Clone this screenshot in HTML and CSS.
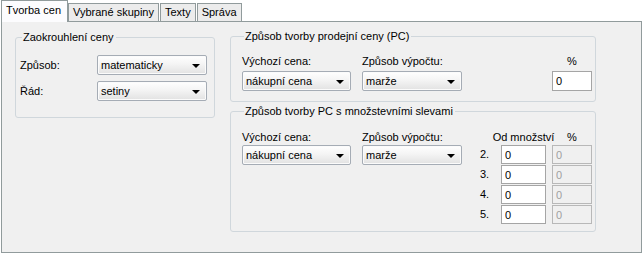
FILE: index.html
```html
<!DOCTYPE html>
<html lang="cs">
<head>
  <meta charset="UTF-8" />
  <title>Tvorba cen</title>
  <link rel="stylesheet" href="styles.css">
</head>
<body>
  <div class="tabs">
    <div class="tab active">Tvorba cen</div>
    <div class="tab">Vybrané skupiny</div>
    <div class="tab">Texty</div>
    <div class="tab">Správa</div>
  </div>

  <div class="panel">
    <fieldset class="group rounding">
      <legend>Zaokrouhlení ceny</legend>
      <div class="form-row">
        <label>Způsob:</label>
        <div class="combo wide"><span>matematicky</span><i class="arrow"></i></div>
      </div>
      <div class="form-row">
        <label>Řád:</label>
        <div class="combo wide"><span>setiny</span><i class="arrow"></i></div>
      </div>
    </fieldset>

    <div class="right-col">
      <fieldset class="group price">
        <legend>Způsob tvorby prodejní ceny (PC)</legend>
        <div class="cols">
          <div class="col col-base">
            <label>Výchozí cena:</label>
            <div class="combo"><span>nákupní cena</span><i class="arrow"></i></div>
          </div>
          <div class="col col-method">
            <label>Způsob výpočtu:</label>
            <div class="combo"><span>marže</span><i class="arrow"></i></div>
          </div>
          <div class="col col-pct">
            <label class="center">%</label>
            <input class="field pct" type="text" value="0">
          </div>
        </div>
      </fieldset>

      <fieldset class="group qty">
        <legend>Způsob tvorby PC s množstevními slevami</legend>
        <div class="cols">
          <div class="col col-base">
            <label>Výchozí cena:</label>
            <div class="combo"><span>nákupní cena</span><i class="arrow"></i></div>
          </div>
          <div class="col col-method">
            <label>Způsob výpočtu:</label>
            <div class="combo"><span>marže</span><i class="arrow"></i></div>
          </div>
          <div class="qty-grid">
            <span></span>
            <label class="head">Od množství</label>
            <label class="head">%</label>

            <span class="num">2.</span>
            <input class="field amount" type="text" value="0">
            <input class="field pct" type="text" value="0" disabled>

            <span class="num">3.</span>
            <input class="field amount" type="text" value="0">
            <input class="field pct" type="text" value="0" disabled>

            <span class="num">4.</span>
            <input class="field amount" type="text" value="0">
            <input class="field pct" type="text" value="0" disabled>

            <span class="num">5.</span>
            <input class="field amount" type="text" value="0">
            <input class="field pct" type="text" value="0" disabled>
          </div>
        </div>
      </fieldset>
    </div>
  </div>
</body>
</html>
```

FILE: styles.css
```css
body {
  margin: 0;
  background: #fff;
  font-family: "Liberation Sans", Arial, sans-serif;
  font-size: 11px;
  color: #000;
}
.tabs {
  display: flex;
  align-items: flex-end;
  height: 20px;
  padding: 1px 0 0 1px;
}
.tab {
  height: 17px;
  line-height: 17px;
  padding: 0 4px;
  margin-right: 1px;
  background: #ececec;
  border: 1px solid #919b9c;
  border-bottom: none;
}
.tab.active {
  position: relative;
  z-index: 1;
  height: 21px;
  line-height: 19px;
  margin-right: 0;
  margin-bottom: -1px;
  padding: 0 6px 0 4px;
  background: #fcfcfe;
}
.panel {
  display: flex;
  align-items: flex-start;
  gap: 15px;
  margin-left: 1px;
  padding: 8px 0 0 13px;
  box-sizing: border-box;
  width: 641px;
  height: 232px;
  background: #f0f0f0;
  border: 1px solid #919b9c;
}
.group {
  margin: 0;
  padding: 0;
  border: 1px solid #d0d7dc;
  border-radius: 3px;
  box-sizing: border-box;
}
.group legend {
  margin-left: 2px;
  padding: 0 2px 0 1px;
  line-height: 13px;
}
label {
  display: block;
  line-height: 14px;
  white-space: nowrap;
}
label.center {
  text-align: center;
}

/* Zaokrouhleni */
.rounding {
  width: 200px;
  margin-top: 1px;
  padding: 11px 7px 16px 4px;
}
.form-row {
  display: flex;
  align-items: center;
  height: 20px;
  margin-bottom: 6px;
}
.form-row:last-child {
  margin-bottom: 0;
}
.form-row label {
  width: 77px;
}

/* combo box */
.combo {
  display: flex;
  align-items: center;
  height: 20px;
  padding: 0 6px 0 3px;
  box-sizing: border-box;
  border: 1px solid #a5acb5;
  border-radius: 2px;
  background: linear-gradient(#ffffff, #f4f4f4 45%, #e2e2e2);
  box-shadow: inset 0 0 0 1px #fbfbfb;
}
.combo span {
  flex: 1;
  line-height: 16px;
}
.combo.wide {
  width: 110px;
}
.arrow {
  width: 0;
  height: 0;
  border-top: 4px solid #000;
  border-left: 4px solid transparent;
  border-right: 4px solid transparent;
  margin-top: 2px;
}

/* right column */
.right-col {
  display: flex;
  flex-direction: column;
  gap: 3px;
}
.price, .qty {
  width: 366px;
}
.price {
  padding: 11px 3px 10px 11px;
}
.qty {
  padding: 12px 3px 7px 11px;
}
.cols {
  display: flex;
  align-items: flex-start;
}
.col label {
  margin-bottom: 3px;
}
.qty .col label {
  margin-bottom: 1px;
}
.col-base {
  width: 109px;
  margin-right: 11px;
}
.col-method {
  width: 100px;
}
.col-pct {
  margin-left: auto;
  width: 40px;
}

.field {
  display: block;
  box-sizing: border-box;
  height: 20px;
  margin: 0;
  padding: 0 3px;
  font: inherit;
  color: #000;
  background: #fff;
  border: 1px solid #a5a5a5;
  border-radius: 0;
  outline: none;
}
.field.pct {
  width: 40px;
}
.field.amount {
  width: 45px;
}
.field:disabled {
  background: #f0f0f0;
  border-color: #b8b8b8;
  color: #a0a0a0;
}

.qty-grid {
  display: grid;
  grid-template-columns: 15px 45px 40px;
  column-gap: 6px;
  row-gap: 1px;
  margin-left: auto;
}
.qty-grid .head {
  justify-self: center;
}
.qty-grid .field {
  height: 19px;
}
.num {
  line-height: 19px;
}
```
